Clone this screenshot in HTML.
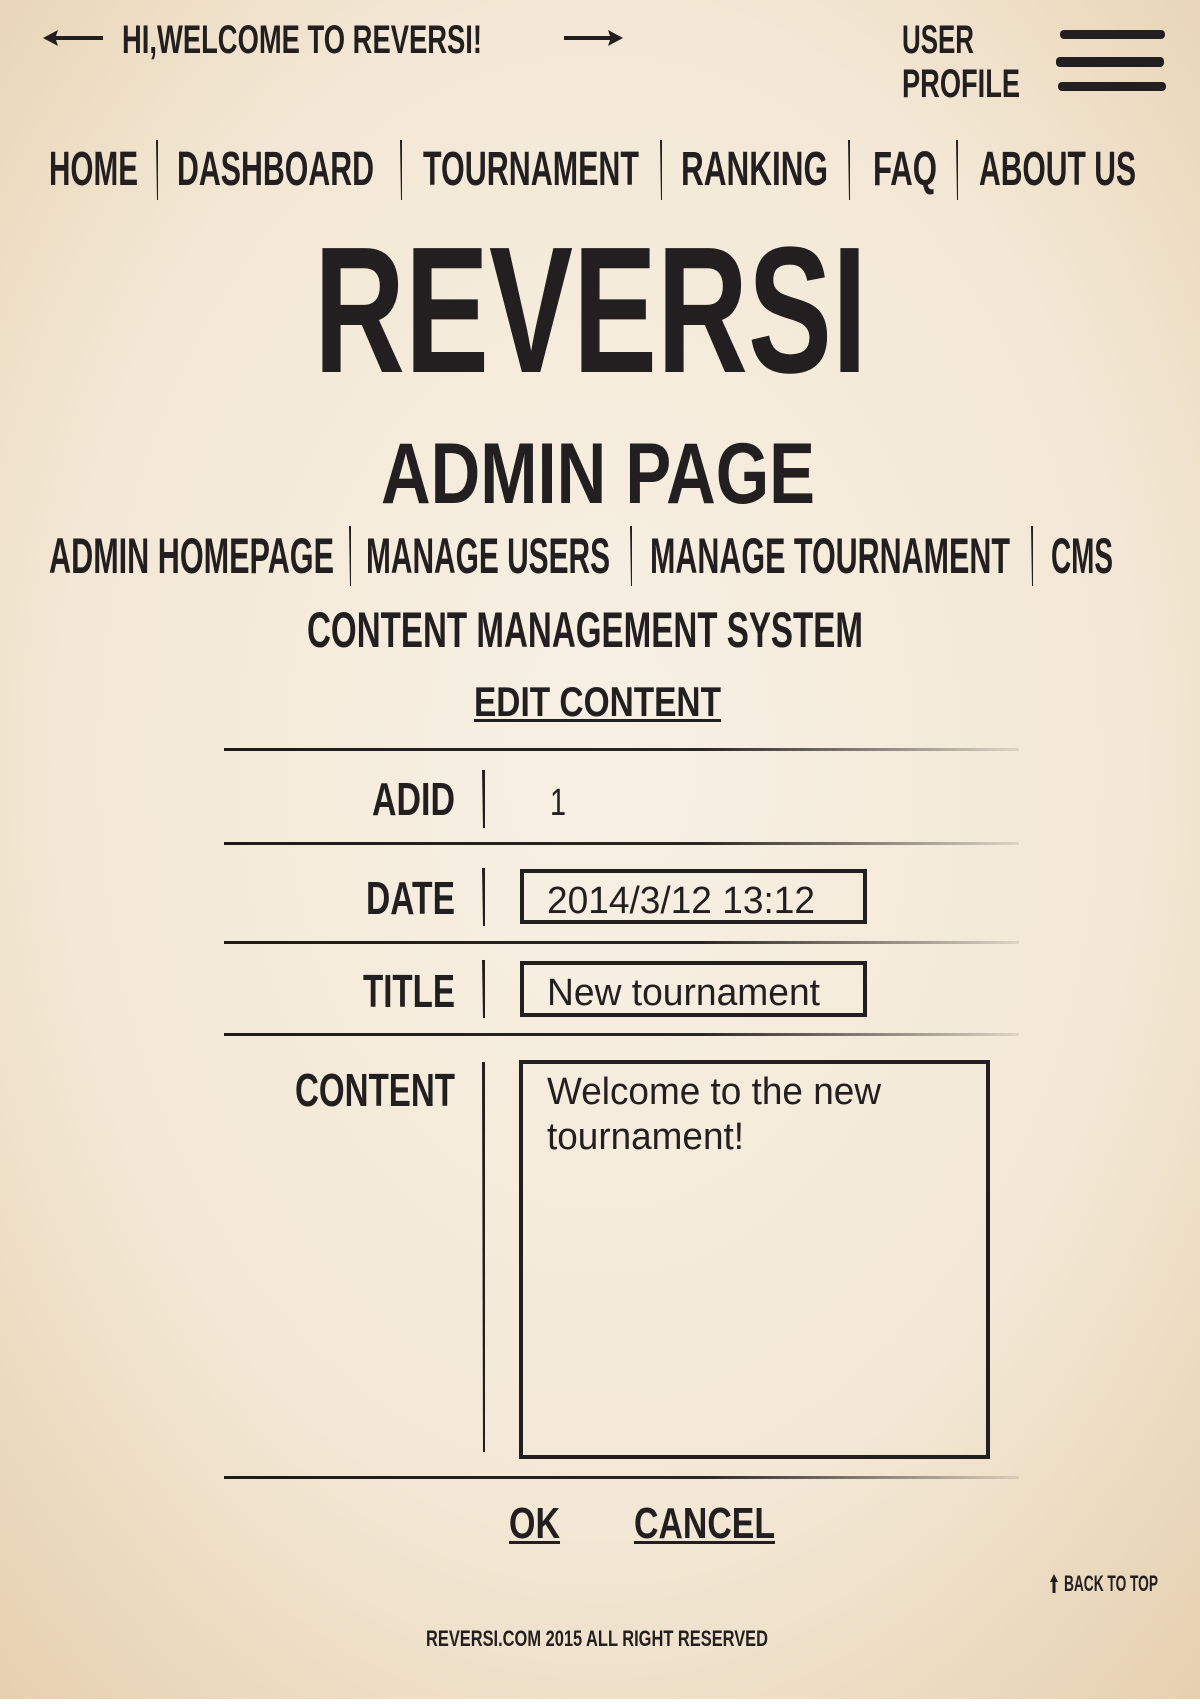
<!DOCTYPE html>
<html><head><meta charset="utf-8"><style>html,body{margin:0;padding:0;}body{width:1200px;height:1699px;overflow:hidden;}</style></head>
<body>
<svg width="1200" height="1699" viewBox="0 0 1200 1699" xmlns="http://www.w3.org/2000/svg">
<defs>
<radialGradient id="bg" cx="50%" cy="45%" r="75%">
<stop offset="0" stop-color="#f7f0e4"/><stop offset="0.6" stop-color="#f3e8d5"/><stop offset="1" stop-color="#e6cfae"/>
</radialGradient>
<linearGradient id="ln" x1="0" x2="1"><stop offset="0" stop-color="#1f1b1a"/><stop offset="0.6" stop-color="#2a2625"/><stop offset="1" stop-color="#231f20" stop-opacity="0.1"/></linearGradient>
</defs>
<rect width="1200" height="1699" fill="url(#bg)"/>
<g fill="#231f20" font-family="Liberation Sans, sans-serif" font-weight="bold">
<path d="M43 38 L58 30 L56 36 L103 36 L103 40 L56 40 L58 46 Z"/>
<path d="M623 38 L608 30 L610 36 L564 36 L564 40 L610 40 L608 46 Z"/>
<text x="122" y="53" font-size="40" textLength="360" lengthAdjust="spacingAndGlyphs">HI,WELCOME TO REVERSI!</text>
<text x="902" y="53" font-size="40" textLength="72" lengthAdjust="spacingAndGlyphs">USER</text>
<text x="902" y="97" font-size="40" textLength="118" lengthAdjust="spacingAndGlyphs">PROFILE</text>
<rect x="1060" y="30" width="105" height="9" rx="4"/>
<rect x="1056" y="57" width="108" height="10" rx="4"/>
<rect x="1058" y="82" width="108" height="9" rx="4"/>
<g font-size="48">
<text x="49" y="185" textLength="89" lengthAdjust="spacingAndGlyphs">HOME</text>
<text x="177" y="185" textLength="197" lengthAdjust="spacingAndGlyphs">DASHBOARD</text>
<text x="423" y="185" textLength="216" lengthAdjust="spacingAndGlyphs">TOURNAMENT</text>
<text x="681" y="185" textLength="147" lengthAdjust="spacingAndGlyphs">RANKING</text>
<text x="873" y="185" textLength="64" lengthAdjust="spacingAndGlyphs">FAQ</text>
<text x="979" y="185" textLength="157" lengthAdjust="spacingAndGlyphs">ABOUT US</text>
</g>
<path d="M156 140 L158 140 L158 200 L157 200 Z"/><path d="M400 140 L402 140 L402 200 L401 200 Z"/>
<path d="M660 140 L662 140 L662 200 L661 200 Z"/><path d="M848 140 L850 140 L850 200 L849 200 Z"/>
<path d="M956 140 L958 140 L958 200 L957 200 Z"/>
<text x="314" y="372" font-size="180" textLength="553" lengthAdjust="spacingAndGlyphs">REVERSI</text>
<text x="381" y="503" font-size="86" textLength="434" lengthAdjust="spacingAndGlyphs">ADMIN PAGE</text>
<g font-size="50">
<text x="49" y="573" textLength="285" lengthAdjust="spacingAndGlyphs">ADMIN HOMEPAGE</text>
<text x="366" y="573" textLength="244" lengthAdjust="spacingAndGlyphs">MANAGE USERS</text>
<text x="650" y="573" textLength="360" lengthAdjust="spacingAndGlyphs">MANAGE TOURNAMENT</text>
<text x="1051" y="573" textLength="62" lengthAdjust="spacingAndGlyphs">CMS</text>
</g>
<path d="M349 526 L351 526 L351 586 L350 586 Z"/><path d="M630 526 L632 526 L632 586 L631 586 Z"/><path d="M1031 526 L1033 526 L1033 586 L1032 586 Z"/>
<text x="307" y="647" font-size="50" textLength="556" lengthAdjust="spacingAndGlyphs">CONTENT MANAGEMENT SYSTEM</text>
<text x="474" y="716" font-size="42" textLength="247" lengthAdjust="spacingAndGlyphs">EDIT CONTENT</text>
<rect x="474" y="719" width="247" height="3"/>
<rect x="224" y="748" width="795" height="3" fill="url(#ln)"/>
<rect x="224" y="842" width="795" height="3" fill="url(#ln)"/>
<rect x="224" y="941" width="795" height="3" fill="url(#ln)"/>
<rect x="224" y="1033" width="795" height="3" fill="url(#ln)"/>
<rect x="224" y="1476" width="795" height="3" fill="url(#ln)"/>
<g font-size="46">
<text x="372" y="815" textLength="83" lengthAdjust="spacingAndGlyphs">ADID</text>
<text x="366" y="914" textLength="89" lengthAdjust="spacingAndGlyphs">DATE</text>
<text x="363" y="1007" textLength="92" lengthAdjust="spacingAndGlyphs">TITLE</text>
<text x="295" y="1106" textLength="160" lengthAdjust="spacingAndGlyphs">CONTENT</text>
</g>
<path d="M482 770 L485 770 L485 828 L483 828 Z"/><path d="M482 868 L485 868 L485 926 L483 926 Z"/>
<path d="M482 960 L485 960 L485 1018 L483 1018 Z"/><path d="M482 1062 L485 1062 L485 1452 L483 1452 Z"/>
<g font-weight="normal" font-size="38">
<text x="550" y="815" textLength="16" lengthAdjust="spacingAndGlyphs">1</text>
<text x="547" y="913" textLength="268" lengthAdjust="spacingAndGlyphs">2014/3/12 13:12</text>
<text x="547" y="1005" textLength="273" lengthAdjust="spacingAndGlyphs">New tournament</text>
<text x="547" y="1104" textLength="334" lengthAdjust="spacingAndGlyphs">Welcome to the new</text>
<text x="547" y="1149" textLength="197" lengthAdjust="spacingAndGlyphs">tournament!</text>
</g>
<g fill="none" stroke="#231f20" stroke-width="4">
<rect x="522" y="871" width="343" height="51"/>
<rect x="522" y="963" width="343" height="52"/>
<rect x="521" y="1062" width="467" height="395"/>
</g>
<text x="509" y="1538" font-size="44" textLength="51" lengthAdjust="spacingAndGlyphs">OK</text>
<rect x="509" y="1541" width="51" height="3"/>
<text x="634" y="1538" font-size="44" textLength="141" lengthAdjust="spacingAndGlyphs">CANCEL</text>
<rect x="634" y="1541" width="141" height="3"/>
<path d="M1054 1574 L1058 1582 L1055.5 1582 L1055.5 1593 L1052.5 1593 L1052.5 1582 L1050 1582 Z"/>
<text x="1064" y="1591" font-size="22" textLength="94" lengthAdjust="spacingAndGlyphs">BACK TO TOP</text>
<text x="426" y="1646" font-size="22" textLength="342" lengthAdjust="spacingAndGlyphs">REVERSI.COM 2015 ALL RIGHT RESERVED</text>
</g>
</svg>
</body></html>
